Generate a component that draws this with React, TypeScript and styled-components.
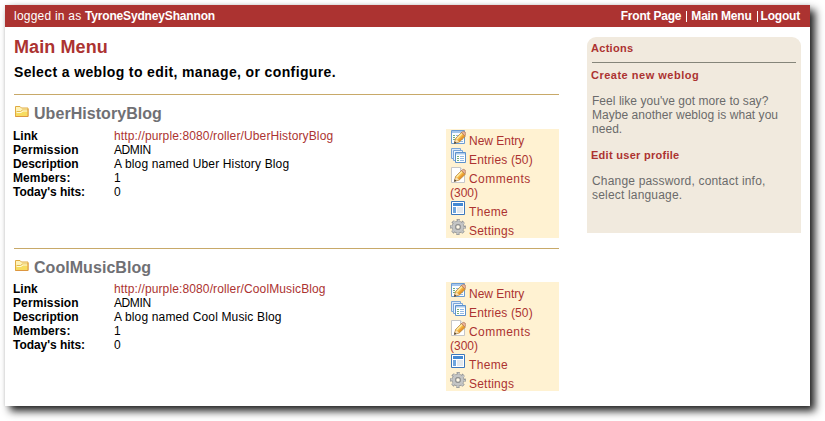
import React from "react";
import styled, { createGlobalStyle } from "styled-components";

const GlobalStyle = createGlobalStyle`
  * { box-sizing: border-box; }
  html, body { margin: 0; background: #fff; overflow: hidden; }
  body { font: 12px/14px "Liberation Sans", Arial, sans-serif; color: #000; }
  a { color: #ac3331; text-decoration: none; }
  svg { display: block; flex: none; }
`;

const Stage = styled.div`
  width: 825px;
  height: 421px;
  padding: 5px 15px 15px 5px;
`;
const Window = styled.div`
  width: 805px;
  height: 401px;
  background: #fff;
  box-shadow: 5px 5px 8px 0 rgba(0, 0, 0, 0.88), 0 0 3px rgba(0, 0, 0, 0.1);
`;
const Banner = styled.header`
  height: 22px;
  padding: 0 10px 0 9px;
  display: flex;
  justify-content: space-between;
  align-items: center;
  background: #ac3331;
  color: #fff;
  white-space: pre;
`;
const Track = styled.span<{ $s: number }>`
  letter-spacing: ${(p) => p.$s}px;
`;
const BannerLinks = styled.nav`
  display: flex;
  font-weight: bold;
  a { color: #fff; letter-spacing: -0.2px; }
`;
const Separator = styled.span<{ $left: number; $right: number }>`
  width: 1px;
  height: 11px;
  margin: 2px ${(p) => p.$right}px 0 ${(p) => p.$left}px;
  background: #fff;
`;
const Body = styled.div`
  display: flex;
  align-items: flex-start;
  padding-left: 9px;
`;
const Main = styled.main`
  width: 545px;
  margin-right: 28px;
`;
const Title = styled.h1`
  margin: 9px 0 0;
  font-size: 18px;
  line-height: 22px;
  letter-spacing: 0.1px;
  color: #ac3331;
`;
const Lead = styled.p`
  margin: 5px 0 13px;
  font-size: 14px;
  line-height: 18px;
  font-weight: bold;
  letter-spacing: 0.37px;
`;
const Section = styled.section`
  height: 154px;
  border-top: 1px solid #c8a969;
`;
const Heading = styled.h2<{ $gap: number }>`
  display: flex;
  align-items: center;
  gap: 4px;
  height: 20px;
  margin: 9px 0 ${(p) => p.$gap}px;
  font-size: 16px;
  line-height: 20px;
  letter-spacing: 0.05px;
  color: #707074;
  svg { margin-top: -4px; }
`;
const Details = styled.div`
  display: flex;
  justify-content: space-between;
  align-items: flex-start;
`;
const Facts = styled.dl`
  display: grid;
  grid-template-columns: 101px auto;
  grid-auto-rows: 14px;
  margin: 0 0 0 -1px;
  white-space: nowrap;
  dt { font-weight: bold; }
  dd { margin: 0; }
`;
const Menu = styled.nav`
  width: 113px;
  height: 109px;
  padding-left: 4px;
  background: #fff2d2;
`;
const MenuItem = styled.a<{ $tall?: boolean }>`
  display: block;
  height: ${(p) => (p.$tall ? 33 : 19)}px;
`;
const MenuLine = styled.span<{ $s: number }>`
  display: flex;
  gap: 3px;
  height: 19px;
  line-height: 14px;
  white-space: nowrap;
  letter-spacing: ${(p) => p.$s}px;
  span { margin-top: 5px; }
`;
const Sidebar = styled.aside`
  width: 214px;
  height: 196px;
  margin-top: 10px;
  padding: 4px 5px 0 4px;
  border-radius: 9px 9px 0 0;
  background: #f1eade;
`;
const ActionTitle = styled.div<{ $s: number }>`
  font-size: 11px;
  font-weight: bold;
  letter-spacing: ${(p) => p.$s}px;
  color: #ac3331;
`;
const Rule = styled.hr`
  height: 1px;
  margin: 7px 0 5px 1px;
  border: 0;
  background: #85857a;
`;
const Note = styled.p<{ $s: number }>`
  margin: 12px 0 12px 1px;
  color: #6b6b6b;
  white-space: nowrap;
  letter-spacing: ${(p) => p.$s}px;
`;

const Folder = () => (
  <svg width="16" height="16" viewBox="0 0 16 16">
    <path d="M1.500 12.500v-10h4.500l1.500 1.500h6.500v8.500z" fill="#fff3b8" stroke="#e0ab42" />
    <path d="M2 12V8h5l1.500-1.500H14V12z" fill="#f7dc60" />
    <path d="M2.500 7.500h4L8.500 6h5" fill="none" stroke="#e3b94c" />
    <path d="M2.500 8.500H7L9 7h4.500" fill="none" stroke="#fffadb" />
    <path d="M1.500 12.500h12.500V5" fill="none" stroke="#dd9640" />
  </svg>
);

const Pencil = () => (
  <g>
    <path d="M4.300 14.300l1.400-4.900L11.600 3.500l3.700 3.700L9.300 12.900z" fill="#f4b640" stroke="#a8742e" strokeWidth=".8" />
    <path d="M6.700 9.900l5.400-5.400" stroke="#ffe9a0" strokeWidth="1.700" />
    <path d="M8.700 12l5.700-5.600" stroke="#e6932f" strokeWidth="1.300" />
    <path d="M11.500 3.700l1-1q1.300-.9 2.600.4t.5 2.600L14.900 6.900z" fill="#eab195" stroke="#a27052" strokeWidth=".6" />
    <path d="M4.600 14l1.400-4.100 3 2.900z" fill="#f8e2b8" />
    <path d="M4 14.700l.8-2.400 1.700 1.700z" fill="#3f3c38" />
  </g>
);

const icons: Record<string, React.ReactNode> = {
  entry: (
    <>
      <path d="M1.500 1.500h13v13h-13z" fill="#fafdff" stroke="#6a9bd2" />
      <path d="M2 2h12v2H2z" fill="#a3c5ec" />
      <path d="M3 6.500h2M3 8.500h2M3 10.500h2" stroke="#74b07a" />
      <path d="M6 6.500h7M6 8.500h7M6 10.500h7M7 12.500h6" stroke="#93bae5" />
      <Pencil />
    </>
  ),
  entries: (
    <>
      <path d="M1.500.5h9v10h-9z" fill="#dceafa" stroke="#7aa6d9" />
      <path d="M3.500 2.500h9v10h-9z" fill="#edf5fd" stroke="#7aa6d9" />
      <path d="M5.500 4.500h10v10h-10z" fill="#fff" stroke="#5d92cb" />
      <path d="M6 5h9v1.500H6z" fill="#a8c9ed" />
      <path d="M7 8.500h2M7 10.500h2M7 12.500h2" stroke="#74b07a" />
      <path d="M10 8.500h4M10 10.500h4M10 12.500h4" stroke="#93bae5" />
    </>
  ),
  comments: (
    <>
      <path d="M1.500.5h9l4 4v11h-13z" fill="#fff" stroke="#c6c7c8" />
      <path d="M10.500.5v4h4" fill="#eee" stroke="#c6c7c8" />
      <Pencil />
    </>
  ),
  theme: (
    <>
      <path d="M1.500 1.500h13v13h-13z" fill="#fff" stroke="#3c78bd" />
      <path d="M3 3h10v3H3z" fill="#4389d3" />
      <path d="M3 7h3v6H3z" fill="#6fa6de" />
      <path d="M7 7h6v6H7z" fill="#e3e8ed" />
    </>
  ),
  settings: (
    <>
      <circle cx="8" cy="8" r="6.600" fill="none" stroke="#949697" strokeWidth="2.600" strokeDasharray="3.100 2.083" strokeDashoffset="1.550" />
      <circle cx="8" cy="8" r="4.300" fill="none" stroke="#929394" strokeWidth="4" />
      <circle cx="8" cy="8" r="6.300" fill="none" stroke="#c7c8c8" strokeWidth="1.800" strokeDasharray="2 2.948" strokeDashoffset="1" />
      <circle cx="8" cy="8" r="4.300" fill="none" stroke="#c4c5c5" strokeWidth="2.800" />
      <circle cx="8" cy="8" r="2.300" fill="#fff8e8" stroke="#858788" strokeWidth="1" />
    </>
  ),
};

const menu = [
  { icon: "entry", label: "New Entry", spacing: 0 },
  { icon: "entries", label: "Entries (50)", spacing: 0.15 },
  { icon: "comments", label: "Comments", spacing: 0.45, count: "(300)" },
  { icon: "theme", label: "Theme", spacing: 0.35 },
  { icon: "settings", label: "Settings", spacing: 0.22 },
];

const blogs = [
  { name: "UberHistoryBlog", about: "A blog named Uber History Blog", gap: 5 },
  { name: "CoolMusicBlog", about: "A blog named Cool Music Blog", gap: 4 },
];

export default function App() {
  return (
    <Stage>
      <GlobalStyle />
      <Window>
        <Banner>
          <div>
            <Track $s={0.22}>logged in as </Track>
            <Track as="b" $s={-0.16}>TyroneSydneyShannon</Track>
          </div>
          <BannerLinks>
            <a href="#">Front Page</a>
            <Separator $left={5} $right={4} />
            <a href="#">Main Menu</a>
            <Separator $left={5} $right={3} />
            <a href="#">Logout</a>
          </BannerLinks>
        </Banner>
        <Body>
          <Main>
            <Title>Main Menu</Title>
            <Lead>Select a weblog to edit, manage, or configure.</Lead>
            {blogs.map((b) => (
              <Section key={b.name}>
                <Heading $gap={b.gap}><Folder />{b.name}</Heading>
                <Details>
                  <Facts>
                    <dt>Link</dt>
                    <dd><a href="#"><Track $s={0.125}>http://purple:8080/roller/{b.name}</Track></a></dd>
                    <dt><Track $s={0.1}>Permission</Track></dt>
                    <dd><Track $s={-0.4}>ADMIN</Track></dd>
                    <dt><Track $s={-0.05}>Description</Track></dt>
                    <dd><Track $s={0.15}>{b.about}</Track></dd>
                    <dt><Track $s={0.1}>Members:</Track></dt><dd>1</dd>
                    <dt><Track $s={-0.05}>Today's hits:</Track></dt><dd>0</dd>
                  </Facts>
                  <Menu>
                    {menu.map((m) => (
                      <MenuItem key={m.icon} href="#" $tall={!!m.count}>
                        <MenuLine $s={m.spacing}>
                          <svg width="16" height="16" viewBox="0 0 16 16">{icons[m.icon]}</svg>
                          <span>{m.label}</span>
                        </MenuLine>
                        {m.count}
                      </MenuItem>
                    ))}
                  </Menu>
                </Details>
              </Section>
            ))}
          </Main>
          <Sidebar>
            <ActionTitle $s={0.3}>Actions</ActionTitle>
            <Rule />
            <ActionTitle $s={0.5}>Create new weblog</ActionTitle>
            <Note $s={0.04}>Feel like you've got more to say?<br />Maybe another weblog is what you<br />need.</Note>
            <ActionTitle $s={0.28}>Edit user profile</ActionTitle>
            <Note $s={0.18}>Change password, contact info,<br />select language.</Note>
          </Sidebar>
        </Body>
      </Window>
    </Stage>
  );
}
